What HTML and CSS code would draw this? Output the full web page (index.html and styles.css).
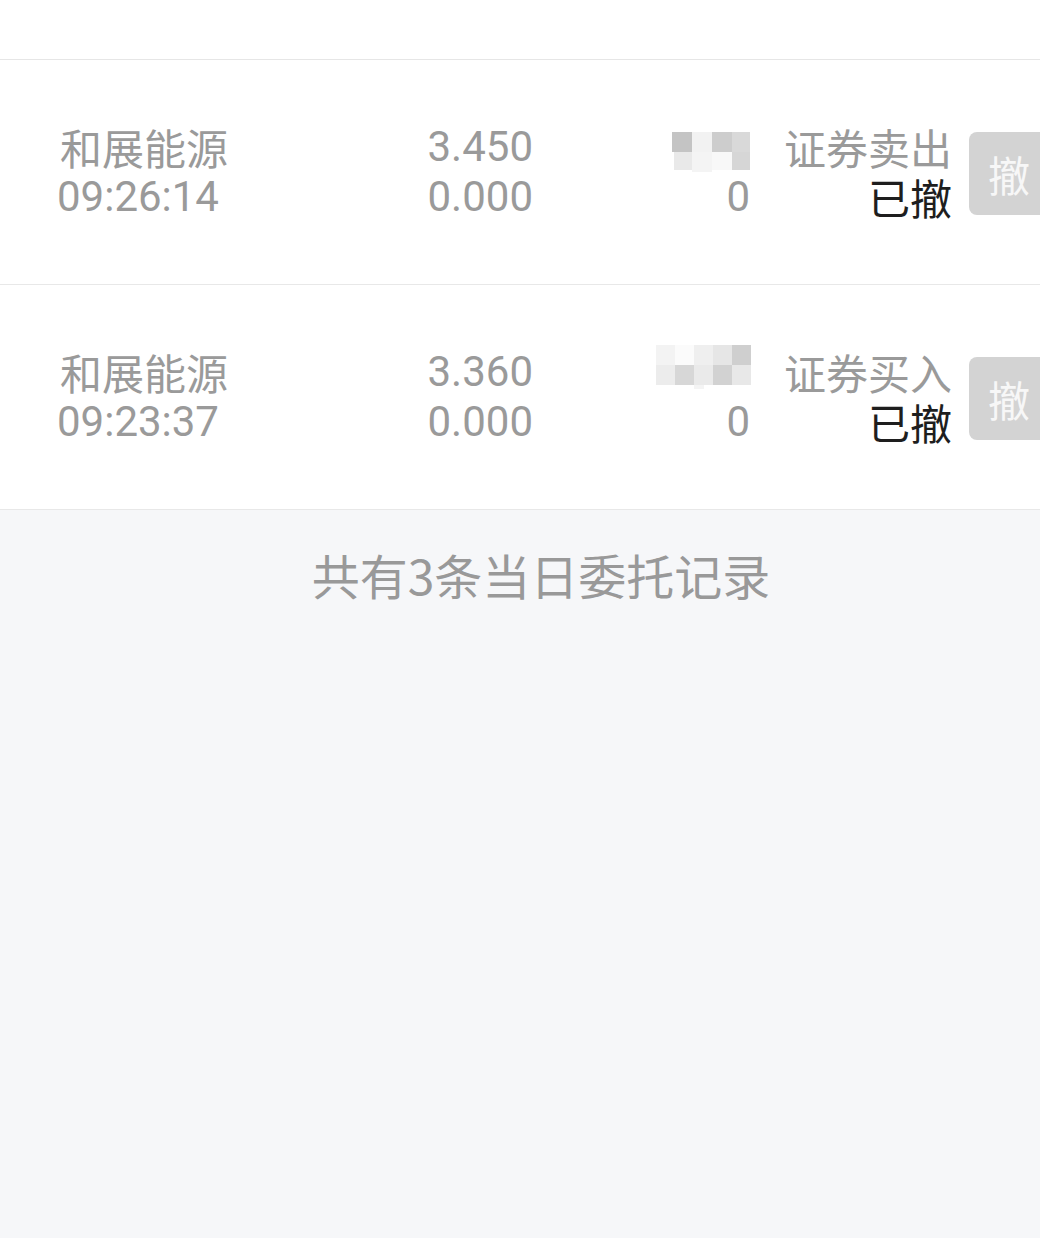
FILE: index.html
```html
<!DOCTYPE html>
<html lang="zh-CN">
<head>
<meta charset="utf-8">
<title>当日委托</title>
<link rel="stylesheet" href="styles.css">
</head>
<body>
<div class="page">
  <div class="top"></div>
  <div class="list">
    <div class="row">
      <div class="cell c1"><div class="line cjk">和展能源</div><div class="line">09:26:14</div></div>
      <div class="cell c2"><div class="line">3.450</div><div class="line">0.000</div></div>
      <div class="cell c3">
        <div class="line mline">
          <svg class="mosaic m1" width="80" height="40" viewBox="0 0 80 40">
            <rect x="0" y="0" width="20" height="20" fill="#c4c4c4"/>
            <rect x="20" y="0" width="20" height="20" fill="#f2f2f2"/>
            <rect x="40" y="0" width="20" height="20" fill="#cdcdcd"/>
            <rect x="60" y="0" width="18" height="20" fill="#d9d9d9"/>
            <rect x="2" y="20" width="18" height="18" fill="#e9e9e9"/>
            <rect x="20" y="20" width="20" height="20" fill="#f4f4f4"/>
            <rect x="40" y="20" width="20" height="18" fill="#f8f8f8"/>
            <rect x="60" y="20" width="18" height="18" fill="#d6d6d6"/>
          </svg>
        </div>
        <div class="line">0</div>
      </div>
      <div class="cell c4"><div class="line cjk">证券卖出</div><div class="line cjk dark">已撤</div></div>
      <div class="cell c5"><button class="cancel">撤</button></div>
    </div>
    <div class="row">
      <div class="cell c1"><div class="line cjk">和展能源</div><div class="line">09:23:37</div></div>
      <div class="cell c2"><div class="line">3.360</div><div class="line">0.000</div></div>
      <div class="cell c3">
        <div class="line mline">
          <svg class="mosaic m2" width="96" height="44" viewBox="0 0 96 44">
            <rect x="0" y="0" width="19" height="20" fill="#f3f3f3"/>
            <rect x="19" y="0" width="19" height="20" fill="#fbfbfb"/>
            <rect x="38" y="0" width="19" height="20" fill="#efefef"/>
            <rect x="57" y="0" width="19" height="20" fill="#e6e6e6"/>
            <rect x="76" y="0" width="19" height="20" fill="#cfcfcf"/>
            <rect x="0" y="20" width="19" height="20" fill="#ececec"/>
            <rect x="19" y="20" width="19" height="20" fill="#d7d7d7"/>
            <rect x="38" y="20" width="19" height="20" fill="#eaeaea"/>
            <rect x="57" y="20" width="19" height="20" fill="#d2d2d2"/>
            <rect x="76" y="20" width="19" height="20" fill="#e8e8e8"/>
            <rect x="38" y="40" width="10" height="4" fill="#f4f4f4"/>
          </svg>
        </div>
        <div class="line">0</div>
      </div>
      <div class="cell c4"><div class="line cjk">证券买入</div><div class="line cjk dark">已撤</div></div>
      <div class="cell c5"><button class="cancel">撤</button></div>
    </div>
  </div>
  <div class="footer">共有3条当日委托记录</div>
</div>
</body>
</html>
```
FILE: styles.css
```css
html, body {
  margin: 0;
  padding: 0;
  background: #f6f7f9;
  overflow: hidden;
}
.page {
  width: 1040px;
  height: 1238px;
  overflow: hidden;
  font-family: Roboto, "Noto Sans CJK SC", sans-serif;
  color: #9a9a9a;
}
.top {
  height: 59px;
  background: #fff;
  border-bottom: 1px solid #e6e6e6;
}
.list {
  background: #fff;
}
.row {
  display: grid;
  grid-template-columns: 300px 176px 217px 202px 117px;
  align-items: center;
  height: 224px;
  padding-left: 57px;
  border-bottom: 1px solid #e8e8e8;
  width: max-content;
}
.line {
  font-size: 42px;
  line-height: 50px;
  height: 50px;
  white-space: nowrap;
}
.cjk {
  font-family: "Noto Sans CJK SC", sans-serif;
  font-size: 42px;
}
.c1 .cjk {
  padding-left: 3px;
}
.c2, .c3, .c4 {
  text-align: right;
}
.mline {
  display: flex;
  justify-content: flex-end;
  align-items: flex-start;
}
.mosaic {
  display: block;
  margin-right: -2px;
}
.m1 {
  margin-top: 10px;
}
.m2 {
  margin-top: -2px;
}
.dark {
  color: #1e1e1e;
}
.c5 {
  padding-left: 17px;
}
.cancel {
  display: block;
  width: 100px;
  height: 83px;
  border: none;
  border-radius: 8px;
  background: #d3d3d3;
  color: #f7f7f7;
  font-family: "Noto Sans CJK SC", sans-serif;
  font-size: 42px;
  text-align: left;
  padding: 0 0 0 19px;
  margin-top: 2px;
}
.footer {
  text-align: center;
  font-family: "Noto Sans CJK SC", sans-serif;
  font-size: 48px;
  line-height: 60px;
  padding-top: 34px;
  padding-left: 42px;
  color: #999;
}
```
